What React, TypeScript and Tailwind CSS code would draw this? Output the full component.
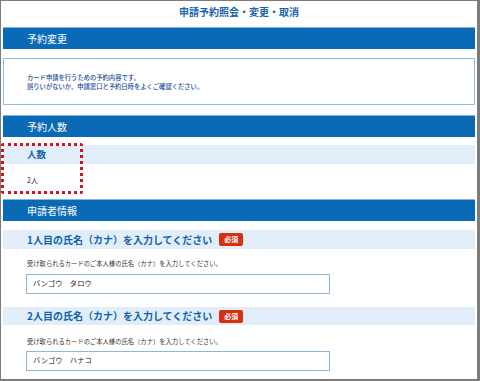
import React from 'react'

const font = { fontFamily: '"Noto Sans CJK JP", "Noto Sans", sans-serif' }

function Bar({ title }: { title: string }) {
  return (
    <div className="h-[22px] bg-[#0a6ab6] border-t border-[#7fb3e0] flex items-center pl-[24px]">
      <span className="text-white text-[10px] leading-none">{title}</span>
    </div>
  )
}

function SubHead({ children, className = '' }: { children: React.ReactNode; className?: string }) {
  return (
    <div className={`bg-[#e1eef9] flex items-center pl-[24px] ${className}`}>
      {children}
    </div>
  )
}

function NameField({ no, value, first }: { no: number; value: string; first?: boolean }) {
  return (
    <div>
      <SubHead className={first ? 'mt-[9px] h-[19px]' : 'mt-[13px] h-[18px]'}>
        <span className="text-[10px] font-bold text-[#0f62ad] leading-none">
          {no}人目の氏名（カナ）を入力してください
        </span>
        <span className="ml-[7px] bg-[#d6300f] text-white text-[7px] font-bold rounded-[2px] px-[5px] h-[13px] flex items-center leading-none">
          必須
        </span>
      </SubHead>
      <p className={`${first ? 'mt-[10px]' : 'mt-[12px]'} ml-[24px] text-[6.3px] leading-[9px] text-[#333]`}>
        受け取られるカードのご本人様の氏名（カナ）を入力してください。
      </p>
      <div className={`${first ? 'mt-[6px]' : 'mt-[5px]'} ml-[23px] w-[304px] h-[20px] border border-[#8fb6d8] flex items-center pl-[6px]`}>
        <span className="text-[7.3px] text-[#222] leading-none">{value}</span>
      </div>
    </div>
  )
}

export default function App() {
  return (
    <div
      style={font}
      className="w-[480px] h-[381px] bg-white border-l border-t border-r-[3px] border-b-2 border-[#7c7c7c] px-[2px] overflow-hidden"
    >
      <div className="h-[26px] flex justify-center pt-[5px]">
        <h1 className="text-[10px] font-bold text-[#1a63ab] leading-[12px]">申請予約照会・変更・取消</h1>
      </div>

      <Bar title="予約変更" />

      <div className="mt-[9px] h-[47px] border border-[#95b9d9] pt-[14px] pl-[23px]">
        <p className="text-[6.3px] leading-[9px] font-medium text-[#1a4a98]">カード申請を行うための予約内容です。</p>
        <p className="text-[6.3px] leading-[9px] font-medium text-[#1a4a98]">誤りいがないか、申請窓口と予約日時をよくご確認ください。</p>
      </div>

      <div className="mt-[10px]">
        <Bar title="予約人数" />
      </div>

      <div className="relative mt-[8px]">
        <SubHead className="h-[19px]">
          <span className="text-[9.5px] font-bold text-[#0f62ad] leading-none">人数</span>
        </SubHead>
        <div className="h-[35px] pl-[24px] pt-[12px]">
          <p className="text-[7px] leading-[9px] text-[#222]">2人</p>
        </div>
        <div className="absolute left-[-2px] top-[-2px] w-[82px] h-[51px] border-[3px] border-dotted border-[#d4121d] rounded-[3px]" />
      </div>

      <Bar title="申請者情報" />

      <NameField no={1} value="バンゴウ　タロウ" first />
      <NameField no={2} value="バンゴウ　ハナコ" />
    </div>
  )
}
